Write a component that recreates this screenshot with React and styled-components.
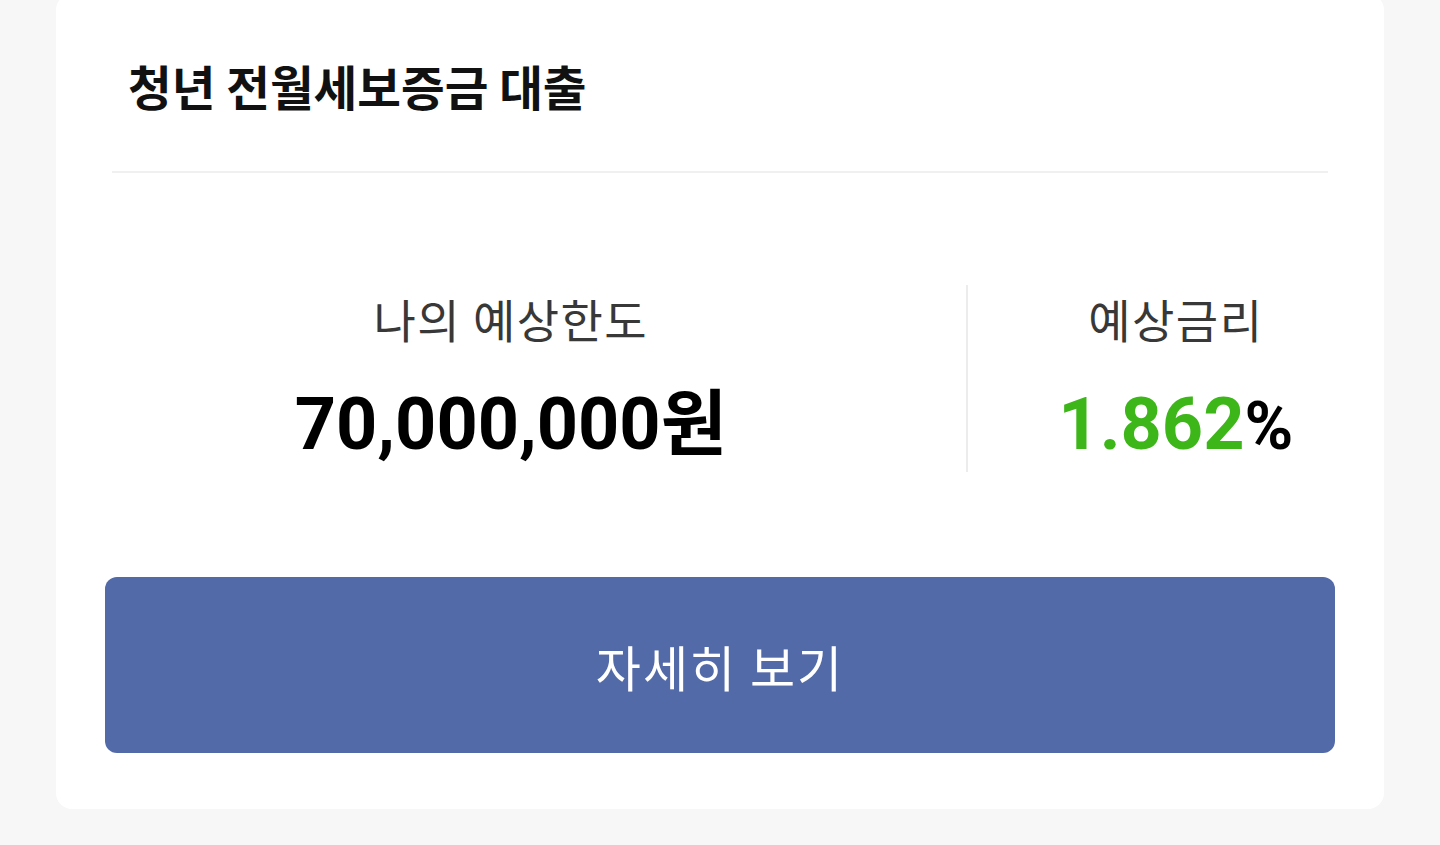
import styled, { createGlobalStyle } from "styled-components";

const GlobalStyle = createGlobalStyle`
  html, body {
    margin: 0;
    padding: 0;
    background: #f7f7f7;
    font-family: Roboto, "Noto Sans CJK KR", sans-serif;
  }
`

const Page = styled.div`
  width: 1440px;
  height: 845px;
  overflow: hidden;
  background: #f7f7f7;
  padding: 0 56px;
  box-sizing: border-box;
`

const Card = styled.section`
  margin-top: -6px;
  background: #fff;
  border-radius: 16px;
  padding-bottom: 56px;
`

const Header = styled.div`
  height: 177px;
  box-sizing: border-box;
  padding: 5px 72px 0;
  display: flex;
  align-items: center;
`

const Title = styled.h2`
  margin: 0;
  font-family: "Noto Sans CJK KR", sans-serif;
  font-size: 47.5px;
  font-weight: 700;
  color: #111;
  letter-spacing: 0;
`

const Line = styled.hr`
  margin: 0 56px;
  border: 0;
  height: 2px;
  background: #f0f0f0;
`

const InfoRow = styled.div`
  display: flex;
  margin-top: 112px;
  height: 187px;
`

const Column = styled.div`
  flex: ${p => p.$grow};
  display: flex;
  flex-direction: column;
  align-items: center;
  border-right: ${p => (p.$divided ? "2px solid #ececec" : "none")};
`

const Label = styled.div`
  margin-top: 5px;
  font-family: "Noto Sans CJK KR", sans-serif;
  font-size: 46px;
  line-height: 56px;
  color: #383838;
  letter-spacing: 1.5px;
`

const Value = styled.div`
  margin-top: 39px;
  font-family: Roboto, "Noto Sans CJK KR", sans-serif;
  font-size: 72px;
  line-height: 80px;
  font-weight: 700;
  color: #000;
  white-space: nowrap;
`

const Rate = styled.span`
  color: #3db619;
`

const Unit = styled.span`
  font-size: ${p => p.$size || "inherit"};
`

const DetailButton = styled.button`
  display: block;
  margin: 105px 49px 0;
  width: calc(100% - 98px);
  height: 176px;
  border: 0;
  border-radius: 12px;
  background: #536aa9;
  color: #fff;
  font-family: "Noto Sans CJK KR", sans-serif;
  font-size: 49px;
  letter-spacing: 2px;
  cursor: pointer;
`

export default function App() {
  return (
    <Page>
      <GlobalStyle />
      <Card>
        <Header>
          <Title>청년 전월세보증금 대출</Title>
        </Header>
        <Line />
        <InfoRow>
          <Column $grow={911} $divided>
            <Label>나의 예상한도</Label>
            <Value>
              70,000,000<Unit>원</Unit>
            </Value>
          </Column>
          <Column $grow={417}>
            <Label>예상금리</Label>
            <Value>
              <Rate>1.862</Rate>
              <Unit $size="66px">%</Unit>
            </Value>
          </Column>
        </InfoRow>
        <DetailButton>자세히 보기</DetailButton>
      </Card>
    </Page>
  )
}
